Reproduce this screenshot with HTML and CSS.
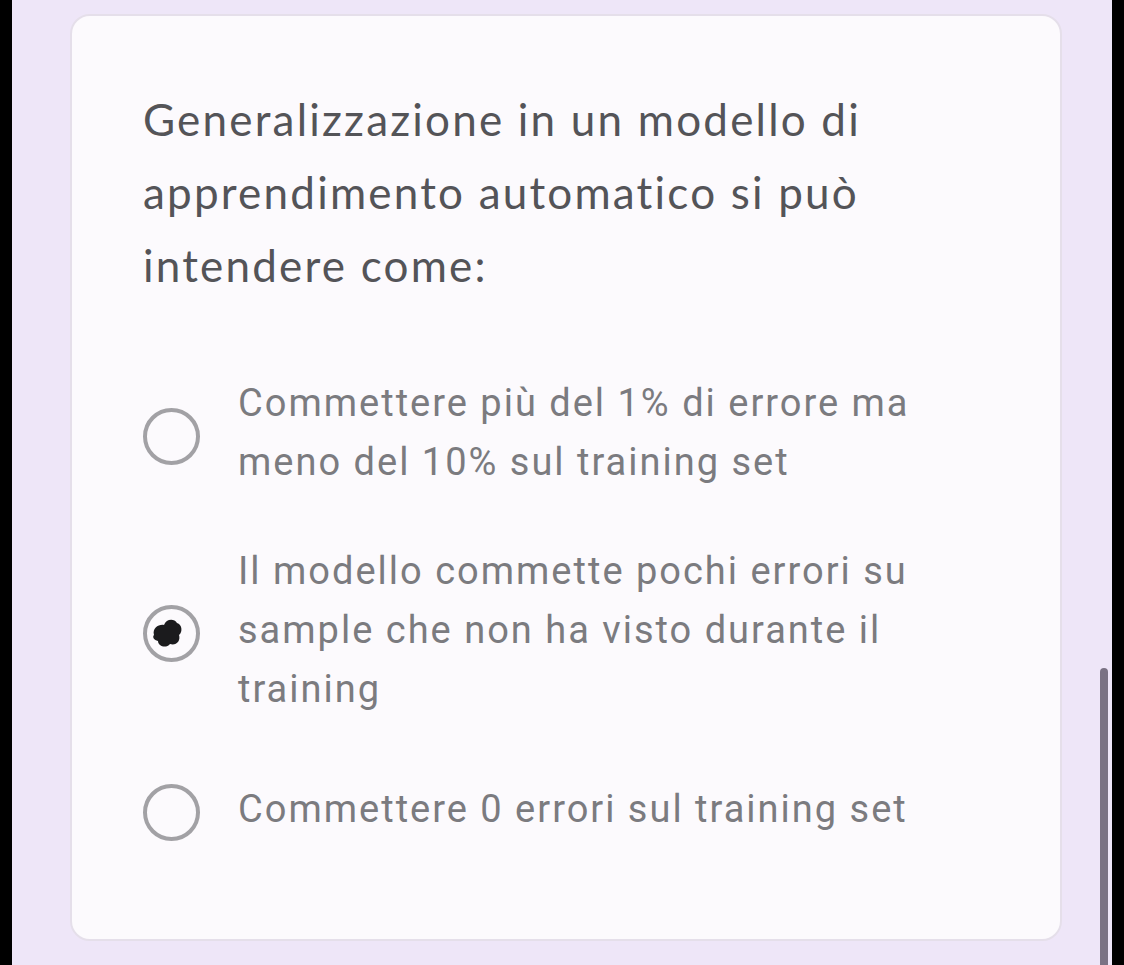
FILE: index.html
```html
<!DOCTYPE html>
<html lang="it">
<head>
<meta charset="utf-8">
<link rel="stylesheet" href="styles.css">
<title>Domanda</title>
</head>
<body>
<div class="edge"></div>
<main class="screen">
  <section class="card">
    <h1 class="question">Generalizzazione in un modello di apprendimento automatico si può intendere come:</h1>
    <div class="options">
      <label class="option">
        <svg class="radio" viewBox="0 0 57 57" width="57" height="57"><circle cx="28.5" cy="28.5" r="26.5" fill="none" stroke="#a2a1a5" stroke-width="4"/></svg>
        <span class="option-text">Commettere più del 1% di errore ma meno del 10% sul training set</span>
      </label>
      <label class="option">
        <svg class="radio" viewBox="0 0 57 57" width="57" height="57"><circle cx="28.5" cy="28.5" r="26.5" fill="none" stroke="#a2a1a5" stroke-width="4"/><path d="M11,30 C9,23 16,19 21,20 C23,14 31,13 34,18 C39,19 40,27 36,30 C38,36 33,41 27,39 C23,44 15,41 15,36 C11,35 9,32 11,30 Z" fill="#1b1b1d"/></svg>
        <span class="option-text">Il modello commette pochi errori su sample che non ha visto durante il training</span>
      </label>
      <label class="option">
        <svg class="radio" viewBox="0 0 57 57" width="57" height="57"><circle cx="28.5" cy="28.5" r="26.5" fill="none" stroke="#a2a1a5" stroke-width="4"/></svg>
        <span class="option-text">Commettere 0 errori sul training set</span>
      </label>
    </div>
  </section>
  <div class="scrollbar"></div>
</main>
<div class="edge"></div>
</body>
</html>
```
FILE: styles.css
```css
html, body {
  margin: 0;
  padding: 0;
  height: 100%;
}
body {
  display: flex;
  width: 1124px;
  height: 965px;
  overflow: hidden;
  background: #000;
}
.edge {
  width: 12px;
  flex: none;
  background: #000;
}
.screen {
  position: relative;
  flex: 1;
  background: #eee6f8;
  padding: 14px 0 0 58px;
  box-sizing: border-box;
}
.card {
  width: 992px;
  height: 927px;
  box-sizing: border-box;
  background: #fcfafd;
  border: 2px solid #e5dfea;
  border-radius: 20px;
  padding: 67px 60px 0 71px;
}
.question {
  margin: 0;
  font-family: Lato, "Open Sans", sans-serif;
  font-weight: 400;
  font-size: 44px;
  line-height: 73px;
  letter-spacing: 2.2px;
  font-variant-ligatures: none;
  color: #545458;
  width: 780px;
}
.options {
  margin-top: 72px;
  display: flex;
  flex-direction: column;
  gap: 50px;
}
.option {
  display: flex;
  align-items: center;
  gap: 38px;
  min-height: 80px;
}
.radio {
  flex: none;
  display: block;
  position: relative;
  top: 3px;
}
.option-text {
  font-family: Roboto, "Liberation Sans", sans-serif;
  font-size: 38px;
  line-height: 59px;
  letter-spacing: 2px;
  color: #7b7b7f;
  width: 700px;
}
.scrollbar {
  position: absolute;
  left: 1088px;
  top: 668px;
  width: 8px;
  bottom: 0;
  background: #7a7284;
  border-radius: 4px 4px 0 0;
}
```
